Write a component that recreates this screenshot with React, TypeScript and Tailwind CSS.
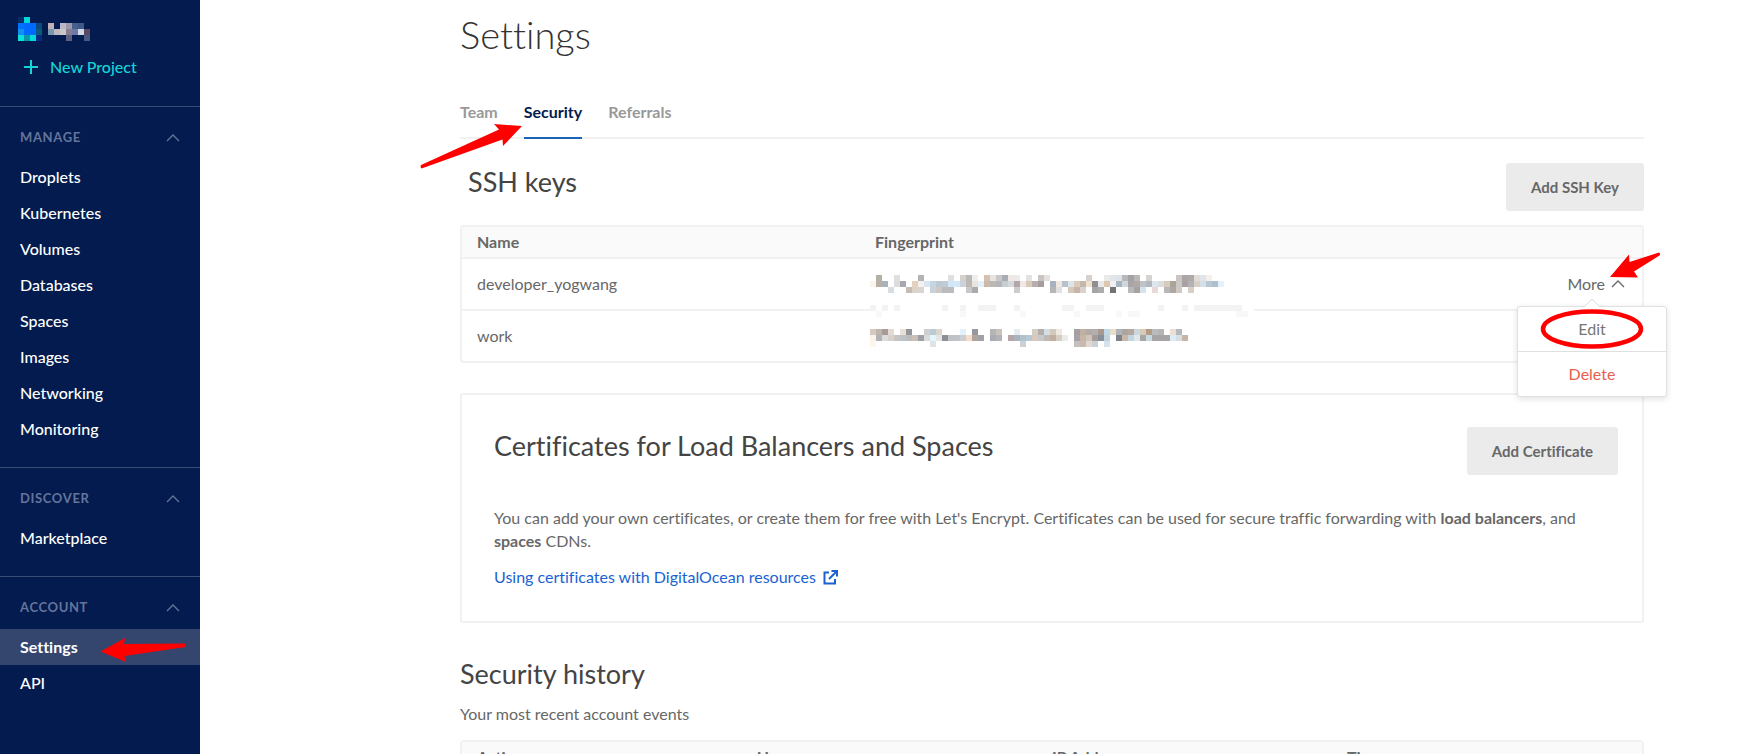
import type { ReactNode } from "react";

type Cell = [number, string];

const CELL = 6;

function Mosaic({ rows, columns, label, className }: { rows: Cell[][]; columns: number; label?: string; className?: string }) {
  return (
    <svg
      width={columns * CELL}
      height={rows.length * CELL}
      viewBox={`0 0 ${columns} ${rows.length}`}
      shapeRendering="crispEdges"
      role={label ? "img" : undefined}
      aria-label={label}
      aria-hidden={label ? undefined : true}
      className={className}
    >
      {rows.map((row, y) => row.map(([x, fill]) => <rect key={`${x}-${y}`} x={x} y={y} width="1" height="1" fill={`#${fill}`} />))}
    </svg>
  );
}

const run = (color: string, ...xs: number[]): Cell[] => xs.map((x) => [x, color]);

const accountCells: Cell[][] = [
  [[0, "0a2c66"], [1, "00d8d8"]],
  [[0, "0070ff"], [1, "0069ff"], [2, "0069ff"], [3, "0a4a80"], [5, "c0b0b8"], [7, "b8b8c8"], [8, "a098a8"], [9, "44608c"], [10, "405888"]],
  [[0, "1090f0"], [1, "0069ff"], [2, "0069ff"], [3, "0c5a7a"], [5, "7898b0"], [6, "c0b8c0"], [7, "c8c8c8"], [8, "887c90"], [9, "7078a8"], [10, "d0d8e8"], [11, "5a4860"]],
  [[0, "0ce0d8"], [1, "0898a8"], [2, "00dcdc"], [3, "052c80"], [8, "606080"], [11, "485880"]],
];

const developerCells: Cell[][] = [
  [[1, "b5b0a5"], [4, "e0dfdd"], [8, "b3b2b4"], [13, "dedfe0"], [15, "d5d0cb"], [16, "b9b9b5"], [17, "eeeeee"], [19, "d5c1b0"], [20, "e8e4e0"], [21, "c8c8c8"], [22, "a8adb5"], [23, "f0e8e4"], [24, "eceaea"], [26, "e2e2e2"], [28, "c9c4c0"], [29, "e8e0e0"], [36, "d8d0cb"], [39, "e9eaea"], [40, "e0e6ea"], [41, "dde3e8"], [42, "b8b8bb"], [43, "a5a2a5"], [44, "bbb8b6"], [46, "d5d4d2"], [51, "c8c5c2"], [52, "ada4a6"], [53, "b0a9aa"], [54, "e0dcd8"], [55, "dfe5ea"], [56, "f3f0ee"]],
  [[0, "faf4ee"], [1, "b8b0a5"], [2, "a9b2b8"], [4, "dcdcdc"], [5, "a6a8ae"], [7, "e3d0bf"], [8, "f4f0f0"], [9, "d9e6f2"], [10, "c5d5e3"], [11, "bdc9d3"], [12, "bfccd6"], [13, "d3e8f6"], [14, "d3e8f6"], [15, "c9d3da"], [16, "bdb8b3"], [17, "e8e4de"], [18, "e4f0fb"], [19, "cdb9a9"], [20, "bbb7b3"], [21, "b3b7bb"], [22, "c8cdd2"], [23, "d6d9dc"], [24, "b0a8a8"], [25, "efe8e4"], [26, "d8c9bb"], [27, "b8adaf"], [28, "a79d9f"], [30, "a9b3bf"], [31, "f0e8e0"], [32, "b8c2cf"], [33, "dde5ea"], [34, "d9ccb9"], [35, "c5b7ad"], [36, "f0e0cf"], [37, "8f8f92"], [38, "e9e9e9"], [39, "dcc8b0"], [40, "eef0f2"], [41, "a8b4c0"], [42, "cfd6dc"], [43, "a8a5a6"], [44, "b0a8a4"], [45, "c0c2c5"], [46, "b3b8c0"], [47, "dbe6ee"], [48, "dcdde0"], [49, "d9ccbb"], [50, "aca39b"], [51, "cbc9c6"], [52, "a8a0a3"], [53, "b3b2b4"], [54, "d8d0c5"], [55, "d5dfea"], [56, "b9c7d3"], [57, "b0bfcd"], [58, "e6f2fb"]],
  [[3, "d8dde2"], [6, "c6bcb4"], [7, "dcd2c6"], [8, "d9d5d3"], [10, "c9d1da"], [11, "cdc8c5"], [12, "b9bbbe"], [13, "bcbcbf"], [16, "c8c8cb"], [17, "a9abaf"], [24, "cfcccb"], [30, "b4b6b8"], [31, "e0e0e0"], [33, "d5c9bd"], [34, "c8b5a8"], [35, "d9d3d0"], [37, "a5a5a8"], [38, "adadb0"], [40, "757377"], [43, "b9b8bb"], [44, "a9a29c"], [45, "d3e3f0"], [47, "ead9d9"], [49, "b8b8b8"], [50, "b0a8a0"], [51, "cec9c2"], [53, "d9cfc4"]],
];

const workCells: Cell[][] = [
  [[0, "d5c8bc"], [1, "beb5b0"], [2, "a8999a"], [3, "e3dad3"], [5, "e8e0d5"], [6, "94959b"], [9, "cfcfcf"], [10, "b9cbd5"], [11, "dcd5cc"], [15, "e2f2fc"], [17, "95989f"], [20, "b5b5b5"], [21, "c9c3bb"], [24, "e6edf0"], [27, "d3cdc3"], [28, "b3aeaa"], [29, "d3dde6"], [30, "d5c8bc"], [31, "eee8e0"], [34, "a5a0a0"], [35, "c0b0a4"], [36, "b5aaa3"], [37, "b0b0b3"], [38, "a8988e"], [39, "c0dbe8"], [40, "eaddcc"], [41, "b0b2b8"], [42, "aaa5a5"], [43, "b5a99d"], [44, "cad7df"], [45, "d9c9b9"], [46, "b29c86"], [47, "b9bcbf"], [48, "b5b5b5"], [50, "eadfd0"], [51, "b3b8bf"]],
  [[0, "fbf3ea"], [1, "b0b2b3"], [2, "dcdcdc"], [3, "d9d0c9"], [4, "c5c5c5"], [5, "bdc2c6"], [6, "bcbcbc"], [7, "c9bfb6"], [8, "9d9fa4"], [9, "dadada"], [10, "e4f5fb"], [11, "e5e5e5"], [12, "8c8e92"], [13, "bcc2c6"], [14, "c0c4c8"], [15, "cbced2"], [16, "f5ddcd"], [17, "b0a49c"], [18, "9fa2a6"], [20, "a8adb3"], [21, "b3b3b6"], [23, "b5a5a5"], [24, "a8b3bd"], [25, "b0c2ce"], [26, "b9c9d3"], [27, "d9c9ba"], [28, "c8c8cb"], [29, "bcb9b6"], [30, "c0afa0"], [31, "d6cdc3"], [32, "e9ece9"], [34, "a5a3a5"], [35, "c5b5a5"], [36, "d0c5ba"], [37, "a59a95"], [38, "85909b"], [39, "c2d3de"], [41, "7d828a"], [42, "c8b7a8"], [43, "c2d5e0"], [44, "e0e8ee"], [45, "a8a5a5"], [46, "c9d9e2"], [47, "a9a5a2"], [48, "a5a5a8"], [49, "a8a5a5"], [50, "dcecf5"], [51, "d5dee3"], [52, "c8b5a5"]],
  [[0, "fdf6ee"], [10, "dde3e6"], [25, "c9d0d6"], [34, "c5c0c0"], [35, "c9b8ad"], [36, "e0d8d0"], [37, "cbd0d5"], [39, "d3e3ee"]],
];

const smudgeCells: Cell[][] = [
  run("f3f3f3", 0, 2, 4, 12, 15, 18, 19, 20, 24, 32, 33, 36, 37, 38, 48, 52, 54, 55, 56, 57, 58, 59, 60, 61),
  run("f8f8f8", 1, 15, 25, 34, 41, 43, 44, 61, 62),
];

function Chevron({ className }: { className?: string }) {
  return (
    <svg width="14" height="8" viewBox="0 0 14 8" fill="none" stroke="currentColor" strokeWidth="1.3" aria-hidden="true" className={className}>
      <path d="M1 7 7 1l6 6" />
    </svg>
  );
}

function NavSection({ title, children }: { title: string; children: ReactNode }) {
  return (
    <section className="border-t border-[#3a4b74] pb-5">
      <button type="button" className="flex h-[52px] w-full items-center justify-between pt-2.5 pr-5 pl-5 text-[13px] font-bold tracking-wider text-[#65749b]">
        {title}
        <Chevron />
      </button>
      <ul>{children}</ul>
    </section>
  );
}

function NavItem({ label, active, children }: { label: string; active?: boolean; children?: ReactNode }) {
  return (
    <li>
      <a href="#" aria-current={active ? "page" : undefined} className={active ? "relative flex h-9 items-center bg-[#35466e] px-5 font-bold text-white" : "flex h-9 items-center px-5 font-medium text-white"}>
        {label}
        {children}
      </a>
    </li>
  );
}

const thClass = "h-8 border-b-2 border-[#f1f1f1] bg-[#fafafa] text-left font-bold";
const headingClass = "text-[27px] leading-[38px] text-[#444]";
const buttonClass = "h-12 shrink-0 rounded-[3px] bg-[#ebebeb] px-[25px] text-[15px] font-bold text-[#676767]";

export default function App() {
  return (
    <div className="flex h-screen overflow-hidden bg-white font-[Lato,sans-serif] text-base text-[#676767] [font-variant-ligatures:none]">
      <aside className="w-[200px] shrink-0 bg-[#031b4e]">
        <div className="h-[106px] pt-[17px]">
          <Mosaic rows={accountCells} columns={12} label="Current project" className="ml-[18px]" />
          <a href="#" className="mt-3.5 flex h-6 items-center gap-3 pl-6 font-medium text-[#14d6d6]">
            <svg width="14" height="14" viewBox="0 0 14 14" stroke="currentColor" strokeWidth="2" aria-hidden="true">
              <path d="M7 0v14M0 7h14" />
            </svg>
            New Project
          </a>
        </div>
        <nav>
          <NavSection title="MANAGE">
            {["Droplets", "Kubernetes", "Volumes", "Databases", "Spaces", "Images", "Networking", "Monitoring"].map((item) => (
              <NavItem key={item} label={item} />
            ))}
          </NavSection>
          <NavSection title="DISCOVER">
            <NavItem label="Marketplace" />
          </NavSection>
          <NavSection title="ACCOUNT">
            <NavItem label="Settings" active>
              <svg width="88" height="26" viewBox="0 0 88 26" fill="#fe0000" aria-hidden="true" className="absolute top-2 left-[100px]">
                <path d="M.5 14.5 25 1l-1 6 61-.5q1.500 2 .5 3.500L24.500 19l1.500 6z" />
              </svg>
            </NavItem>
            <NavItem label="API" />
          </NavSection>
        </nav>
      </aside>

      <main className="min-w-0 flex-1 pt-2.5 pr-[101px] pl-[260px]">
        <h1 className="text-[38px] leading-[48px] font-light text-[#333]">Settings</h1>
        <nav className="mt-[42px] flex h-[39px] gap-[26px] border-b-2 border-[#f1f1f1] leading-6 font-bold text-[#999]">
          <a href="#">Team</a>
          <a href="#" aria-current="page" className="relative h-[39px] border-b-2 border-[#1b62bd] text-[#031b4e]">
            Security
            <svg width="104" height="48" viewBox="0 0 104 48" fill="#fe0000" aria-hidden="true" className="absolute top-[22px] -left-[105px]">
              <path d="M103 4 75 2l5 5.500L2 43q-1 2 .5 3.500L83.500 17.500 84 24z" />
            </svg>
          </a>
          <a href="#">Referrals</a>
        </nav>

        <section>
          <div className="mt-6 mb-3.5 flex items-start justify-between pl-2">
            <h2 className={headingClass}>SSH keys</h2>
            <button type="button" className={buttonClass}>Add SSH Key</button>
          </div>
          <div className="rounded border-2 border-[#f1f1f1]">
            <table className="w-full table-fixed border-separate border-spacing-0">
              <thead>
                <tr>
                  <th className={`${thClass} w-[35%] pl-[15px]`}>Name</th>
                  <th className={thClass}>Fingerprint</th>
                  <th className={`${thClass} w-[130px]`} aria-label="Actions" />
                </tr>
              </thead>
              <tbody>
                <tr>
                  <td className="h-[52px] border-b-2 border-[#f1f1f1] pl-[15px]">developer_yogwang</td>
                  <td className="border-b-2 border-[#f1f1f1]">
                    <Mosaic rows={developerCells} columns={59} label="Hidden fingerprint" className="-ml-[5px]" />
                  </td>
                  <td className="border-b-2 border-[#f1f1f1] pr-[17px]">
                    <div className="relative flex justify-end">
                      <button type="button" aria-expanded="true" className="flex items-center gap-1.5">
                        More
                        <Chevron />
                      </button>
                      <svg width="52" height="26" viewBox="0 0 52 26" fill="#fe0000" aria-hidden="true" className="absolute -top-5 -right-9">
                        <path d="M1 25 20 2.500 20.500 10 50 .5q2 1 .5 3L25 19.500l4 6z" />
                      </svg>
                      <div className="absolute top-[34px] -right-[42px] z-10 w-[150px] rounded-[3px] border border-[#e0e0e0] bg-white shadow-[0_2px_6px_rgba(0,0,0,0.12)]">
                        <svg width="18" height="9" viewBox="0 0 18 9" fill="#fff" stroke="#dcdcdc" aria-hidden="true" className="absolute -top-[9px] left-[65px]">
                          <path d="M1 9 9 1l8 8" />
                        </svg>
                        <button type="button" className="relative h-[45px] w-full border-b border-[#e0e0e0] text-[#777]">
                          Edit
                          <svg width="104" height="42" viewBox="0 0 104 42" fill="none" stroke="#fe0000" strokeWidth="4.500" aria-hidden="true" className="absolute top-px left-[22px]">
                            <ellipse cx="52" cy="21" rx="49" ry="17.500" />
                          </svg>
                        </button>
                        <button type="button" className="h-11 w-full text-[#e8604c]">Delete</button>
                      </div>
                    </div>
                  </td>
                </tr>
                <tr>
                  <td className="h-[50px] pl-[15px]">work</td>
                  <td className="relative pt-1">
                    <Mosaic rows={smudgeCells} columns={64} className="absolute -top-1.5 -left-[5px] bg-white" />
                    <Mosaic rows={workCells} columns={59} label="Hidden fingerprint" className="-ml-[5px]" />
                  </td>
                  <td />
                </tr>
              </tbody>
            </table>
          </div>
        </section>

        <section className="mt-[30px] rounded-[3px] border-2 border-[#f1f1f1] py-8 pr-6 pl-8">
          <div className="flex items-start justify-between">
            <h2 className={headingClass}>Certificates for Load Balancers and Spaces</h2>
            <button type="button" className={buttonClass}>Add Certificate</button>
          </div>
          <p className="mt-[31px] leading-[23px]">
            You can add your own certificates, or create them for free with Let's Encrypt. Certificates can be used for secure traffic forwarding with{" "}
            <strong className="font-bold">load balancers</strong>, and <strong className="font-bold">spaces</strong> CDNs.
          </p>
          <a href="#" className="mt-[13px] flex h-6 w-fit items-center gap-[7px] text-[#1a62d2]">
            Using certificates with DigitalOcean resources
            <svg width="15" height="15" viewBox="0 0 15 15" fill="none" stroke="currentColor" strokeWidth="2" aria-hidden="true">
              <path d="M6 2.500H1.500v11h10.500V9M8.500 1H14v5.500M13.500 1.500 6 9" />
            </svg>
          </a>
        </section>

        <section className="mt-8">
          <h2 className={headingClass}>Security history</h2>
          <p className="mt-[9px] leading-6">Your most recent account events</p>
          <div className="mt-3.5 rounded border-2 border-[#f1f1f1]">
            <table className="w-full table-fixed border-separate border-spacing-0">
              <thead>
                <tr>
                  <th className={`${thClass} pl-[15px]`}>Action</th>
                  <th className={thClass}>User</th>
                  <th className={thClass}>IP Address</th>
                  <th className={thClass}>Time</th>
                </tr>
              </thead>
            </table>
          </div>
        </section>
      </main>
    </div>
  );
}
